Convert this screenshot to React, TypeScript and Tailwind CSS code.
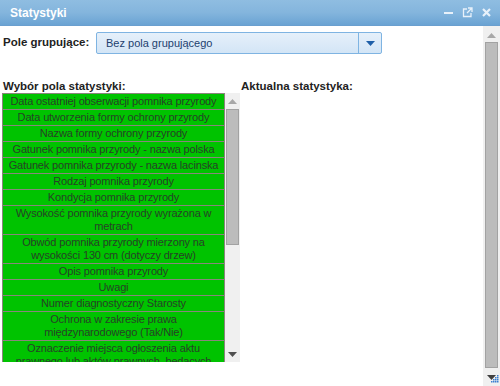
import React from "react";

const fields = [
  "Data ostatniej obserwacji pomnika przyrody",
  "Data utworzenia formy ochrony przyrody",
  "Nazwa formy ochrony przyrody",
  "Gatunek pomnika przyrody - nazwa polska",
  "Gatunek pomnika przyrody - nazwa lacinska",
  "Rodzaj pomnika przyrody",
  "Kondycja pomnika przyrody",
  "Wysokość pomnika przyrody wyrażona w metrach",
  "Obwód pomnika przyrody mierzony na wysokości 130 cm (dotyczy drzew)",
  "Opis pomnika przyrody",
  "Uwagi",
  "Numer diagnostyczny Starosty",
  "Ochrona w zakresie prawa międzynarodowego (Tak/Nie)",
  "Oznaczenie miejsca ogłoszenia aktu prawnego lub aktów prawnych, będących podstawą utworzenia formy ochrony przyrody",
];

function UpArrow() {
  return (
    <svg width="9" height="5" viewBox="0 0 9 5">
      <path d="M0 5 L4.5 0 L9 5 Z" fill="#a8a8a8" />
    </svg>
  );
}

function DownArrow({ color = "#505050" }: { color?: string }) {
  return (
    <svg width="9" height="5" viewBox="0 0 9 5">
      <path d="M0 0 L9 0 L4.5 5 Z" fill={color} />
    </svg>
  );
}

export default function App() {
  return (
    <div
      className="w-[500px] h-[386px] bg-white overflow-hidden flex flex-col text-[11px] text-[#222]"
      style={{ fontFamily: '"Liberation Sans", Arial, sans-serif' }}
    >
      {/* Title bar */}
      <div className="h-[26px] shrink-0 flex items-center justify-between pl-[10px] pr-[8px] bg-gradient-to-b from-[#8fbde1] via-[#84b5dd] to-[#6aa3d3] border-b border-[#6a9fcf]">
        <span className="font-bold text-white text-[12px]">Statystyki</span>
        <div className="flex items-center gap-[8px]">
          <svg width="11" height="11" viewBox="0 0 11 11">
            <rect x="1" y="5" width="9" height="2" fill="#e8f1fa" />
          </svg>
          <svg width="11" height="11" viewBox="0 0 11 11" fill="none" stroke="#e8f1fa" strokeWidth="1.3">
            <path d="M5 2 H1.5 V9.5 H9 V6" />
            <path d="M6 1 H10 V5 M10 1 L5 6" />
          </svg>
          <svg width="11" height="11" viewBox="0 0 11 11" stroke="#e8f1fa" strokeWidth="2.2">
            <path d="M2 2 L9 9 M9 2 L2 9" />
          </svg>
        </div>
      </div>

      {/* Body */}
      <div className="flex-1 flex min-h-0">
        <div className="flex-1 flex flex-col pt-[6px]">
          <div className="flex items-center h-[22px]">
            <span className="font-bold pl-[3px] w-[96px] text-[11.5px]">Pole grupujące:</span>
            <div className="w-[286px] h-[22px] flex border border-[#7fb4e2] rounded-[2px] bg-gradient-to-b from-[#e6f0fa] to-[#d3e5f6]">
              <span className="flex-1 flex items-center pl-[9px] text-[#1d3f6e]">Bez pola grupującego</span>
              <div className="w-[23px] border-l border-[#7fb4e2] flex items-center justify-center">
                <DownArrow color="#1f5fa8" />
              </div>
            </div>
          </div>

          <div className="flex mt-[26px]">
            <div className="w-[238px] ml-[2px] flex flex-col">
              <span className="font-bold pl-[1px] text-[11.5px] leading-[12px] mb-[1px]">Wybór pola statystyki:</span>
              <div className="flex h-[269px]">
                <div className="w-[223px] overflow-hidden border-l border-t border-r border-[#8a857c] bg-[#00c300]">
                  {fields.map((f) => (
                    <div
                      key={f}
                      className="border-b border-[#8a857c] px-[1px] pt-[1px] pb-[1px] leading-[13px] tracking-[-0.15px] text-center text-[#264226]"
                    >
                      {f}
                    </div>
                  ))}
                </div>
                <div className="w-[15px] bg-[#f0f0f0] flex flex-col items-center">
                  <div className="h-[16px] flex items-center justify-center">
                    <UpArrow />
                  </div>
                  <div className="w-[13px] h-[136px] bg-[#bcbcbc] border border-[#a2a2a2]" />
                  <div className="flex-1" />
                  <div className="h-[16px] flex items-center justify-center">
                    <DownArrow />
                  </div>
                </div>
              </div>
            </div>
            <span className="font-bold pl-[1px] text-[11.5px] leading-[12px]">Aktualna statystyka:</span>
          </div>
        </div>

        {/* Outer scrollbar */}
        <div className="w-[17px] bg-[#f0f0f0] flex flex-col items-center">
          <div className="h-[16px] flex items-center justify-center pt-[2px]">
            <UpArrow />
          </div>
          <div className="w-[13px] flex-1 bg-[#bcbcbc] border border-[#a2a2a2]" />
          <div className="h-[18px] relative w-full flex items-center justify-center">
            <DownArrow color="#404040" />
            <svg className="absolute right-[1px] bottom-[3px]" width="10" height="10" viewBox="0 0 10 10">
              {[
                [8, 2], [6, 4], [8, 4], [4, 6], [6, 6], [8, 6], [2, 8], [4, 8], [6, 8], [8, 8],
              ].map(([x, y]) => (
                <rect key={`${x}-${y}`} x={x} y={y} width="1.5" height="1.5" fill="#3a7fd0" />
              ))}
            </svg>
          </div>
        </div>
      </div>
    </div>
  );
}
